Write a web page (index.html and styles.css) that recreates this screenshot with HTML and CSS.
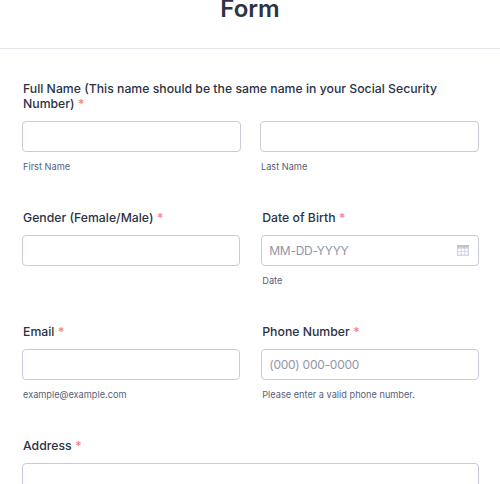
FILE: index.html
```html
<!DOCTYPE html>
<html lang="en">
<head>
<meta charset="utf-8">
<title>Form</title>
<link rel="stylesheet" href="styles.css">
</head>
<body>
<main class="page">
  <header class="header"><h1 class="title">Form</h1></header>
  <form class="form">
    <section class="field field-name">
      <div class="label">Full Name (This name should be the same name in your Social Security Number) <span class="req">*</span></div>
      <div class="row row-name">
        <div class="col"><div class="input"></div><div class="sub">First Name</div></div>
        <div class="col"><div class="input"></div><div class="sub">Last Name</div></div>
      </div>
    </section>
    <div class="row row-fields row-gender">
      <section class="col">
        <div class="label">Gender (Female/Male) <span class="req">*</span></div>
        <div class="input"></div>
      </section>
      <section class="col">
        <div class="label">Date of Birth <span class="req">*</span></div>
        <div class="input"><span class="ph">MM-DD-YYYY</span>
          <svg class="cal" viewBox="0 0 12 11" width="12" height="11" aria-hidden="true">
            <rect x="0" y="0" width="12" height="11" rx="1" fill="#d5d7e2"/>
            <rect x="0" y="0" width="12" height="2.4" fill="#bfc3d2"/>
            <path d="M1.4 3.8h2.4v2.2H1.4zM4.8 3.8h2.4v2.2H4.8zM8.2 3.8h2.4v2.2H8.2zM1.4 7h2.4v2.4H1.4zM4.8 7h2.4v2.4H4.8zM8.2 7h2.4v2.4H8.2z" fill="#fff"/>
          </svg>
        </div>
        <div class="sub">Date</div>
      </section>
    </div>
    <div class="row row-fields row-email">
      <section class="col">
        <div class="label">Email <span class="req">*</span></div>
        <div class="input"></div>
        <div class="sub">example@example.com</div>
      </section>
      <section class="col">
        <div class="label">Phone Number <span class="req">*</span></div>
        <div class="input"><span class="ph">(000) 000-0000</span></div>
        <div class="sub">Please enter a valid phone number.</div>
      </section>
    </div>
    <section class="field field-address">
      <div class="label">Address <span class="req">*</span></div>
      <div class="input input-tall"></div>
    </section>
  </form>
</main>
</body>
</html>
```
FILE: styles.css
```css
* { box-sizing: border-box; }
html, body { margin: 0; padding: 0; background: #fff; }
body { height: 484px; overflow: hidden; font-family: Inter, "Liberation Sans", sans-serif; color: #2c3345; }
.page { width: 500px; height: 484px; overflow: hidden; }
.header { height: 49px; border-bottom: 1px solid #e3e5ec; display: flex; align-items: flex-end; justify-content: center; padding-bottom: 19px; }
.title { margin: 0; font-size: 24px; line-height: 40px; font-weight: 600; color: #2c3345; }
.form { padding: 32px 21px 0 22px; }
.label { font-size: 12.25px; line-height: 15px; font-weight: 500; padding-left: 1px; }
.req { color: #f23a3c; opacity: .6; font-weight: 700; }
.field-name .label { margin-bottom: 10px; }
.row { display: flex; }
.row-name { gap: 19px; }
.row-fields { gap: 21.5px; }
.col { flex: 1 1 0; min-width: 0; }
.row-fields .label { margin-bottom: 10.5px; }
.input { height: 30.5px; border: 1px solid #c9cbd9; border-radius: 4px; background: #fff; display: flex; align-items: center; justify-content: space-between; padding: 0 9px 0 7px; }
.ph { font-size: 12px; letter-spacing: -0.25px; color: #9296a8; }
.cal { flex: none; }
.sub { font-size: 9.2px; line-height: 12px; color: #57607a; padding-left: 1px; margin-top: 9px; }
.row-gender { margin-top: 37px; }
.row-email { margin-top: 37px; height: 74px; }
.field-address { margin-top: 40px; }
.field-address .label { margin-bottom: 10.5px; }
.input-tall { height: 40px; }
```
